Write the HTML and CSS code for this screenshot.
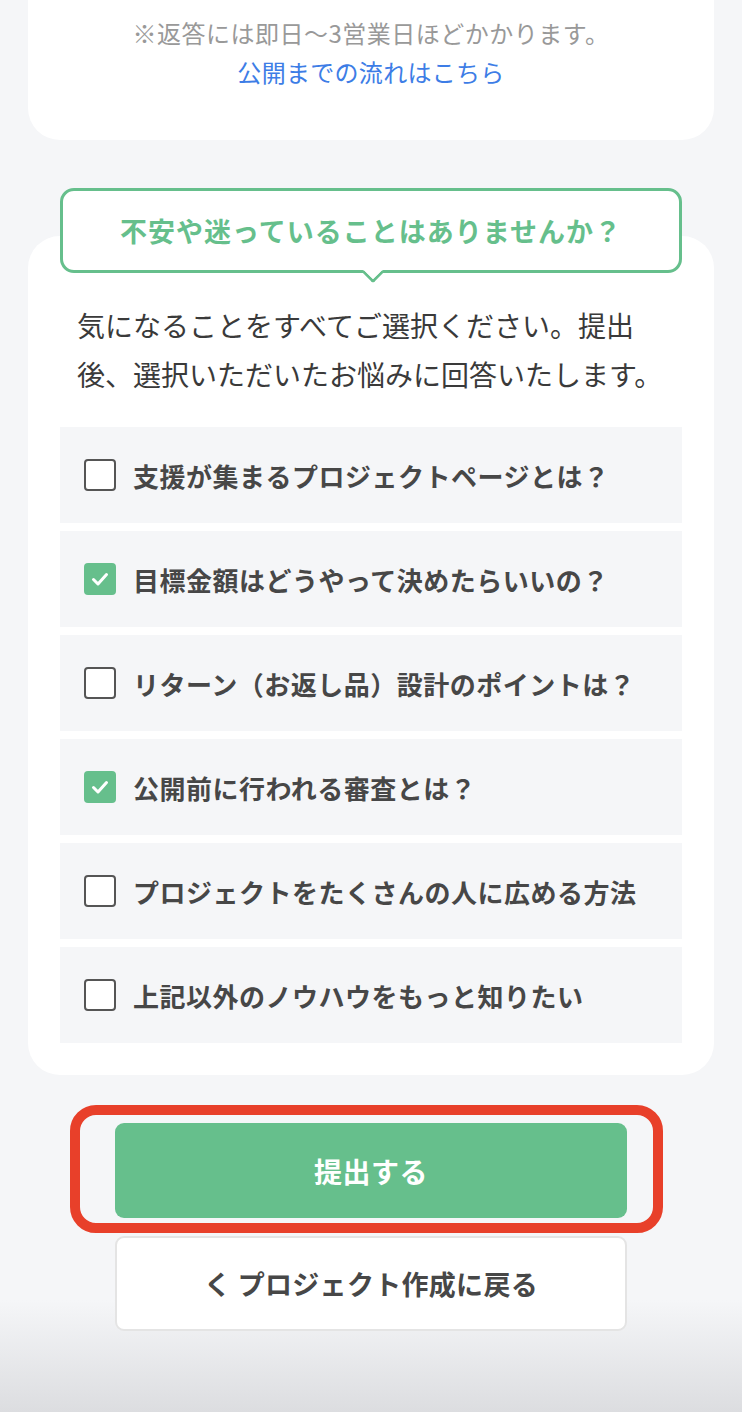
FILE: index.html
```html
<!DOCTYPE html>
<html lang="ja">
<head>
<meta charset="utf-8">
<title>お悩み選択</title>
<link rel="stylesheet" href="styles.css">
</head>
<body>
<main class="page">
  <section class="card card-top">
    <p class="note">※返答には即日〜3営業日ほどかかります。</p>
    <a class="flow-link" href="#">公開までの流れはこちら</a>
  </section>

  <section class="card card-form">
    <div class="bubble">不安や迷っていることはありませんか？</div>
    <p class="lead">気になることをすべてご選択ください。提出後、選択いただいたお悩みに回答いたします。</p>
    <ul class="options">
      <li class="option"><span class="box"></span><span class="label">支援が集まるプロジェクトページとは？</span></li>
      <li class="option"><span class="box checked"><svg viewBox="0 0 32 32" width="32" height="32"><path d="M9.5 16.5 L14 21 L22.5 11.5" fill="none" stroke="#fff" stroke-width="3" stroke-linecap="round" stroke-linejoin="round"/></svg></span><span class="label">目標金額はどうやって決めたらいいの？</span></li>
      <li class="option"><span class="box"></span><span class="label">リターン（お返し品）設計のポイントは？</span></li>
      <li class="option"><span class="box checked"><svg viewBox="0 0 32 32" width="32" height="32"><path d="M9.5 16.5 L14 21 L22.5 11.5" fill="none" stroke="#fff" stroke-width="3" stroke-linecap="round" stroke-linejoin="round"/></svg></span><span class="label">公開前に行われる審査とは？</span></li>
      <li class="option"><span class="box"></span><span class="label">プロジェクトをたくさんの人に広める方法</span></li>
      <li class="option"><span class="box"></span><span class="label">上記以外のノウハウをもっと知りたい</span></li>
    </ul>
  </section>

  <div class="actions">
    <div class="submit-wrap">
      <button class="btn btn-submit" type="button">提出する</button>
      <span class="highlight"></span>
    </div>
    <button class="btn btn-back" type="button">く プロジェクト作成に戻る</button>
  </div>
</main>
</body>
</html>
```

FILE: styles.css
```css
html {
  background: #f5f6f8;
}
body {
  margin: 0;
  min-height: 1412px;
  font-family: "Noto Sans CJK JP", "Noto Sans", sans-serif;
  color: #333;
  background: linear-gradient(to bottom, #f5f6f8 0, #f5f6f8 1300px, #dcdde0 1412px);
}
.page {
  padding: 0 28px;
}
.card {
  background: #fff;
}
.card-top {
  height: 140px;
  box-sizing: border-box;
  padding-top: 14px;
  border-radius: 0 0 32px 32px;
  text-align: center;
}
.note {
  margin: 0;
  font-size: 24px;
  line-height: 38px;
  color: #999;
  letter-spacing: 0.5px;
}
.flow-link {
  display: block;
  font-size: 24px;
  line-height: 40px;
  color: #3d7de6;
  text-decoration: none;
  letter-spacing: 0.3px;
}
.card-form {
  margin-top: 96px;
  padding: 0 32px 32px;
  border-radius: 32px;
  display: flex;
  flex-direction: column;
}
.bubble {
  position: relative;
  margin-top: -48px;
  height: 85px;
  box-sizing: border-box;
  border: 3px solid #66bf8c;
  border-radius: 14px;
  background: #fff;
  display: flex;
  align-items: center;
  justify-content: center;
  font-size: 27px;
  font-weight: 700;
  color: #66bf8c;
  letter-spacing: 1px;
}
.bubble::after {
  content: "";
  position: absolute;
  left: 50%;
  bottom: -10px;
  width: 13px;
  height: 13px;
  margin-left: -6px;
  background: #fff;
  border-right: 3px solid #66bf8c;
  border-bottom: 3px solid #66bf8c;
  border-bottom-right-radius: 3px;
  transform: rotate(45deg);
}
.lead {
  margin: 28px 0 28px 17px;
  width: 600px;
  font-size: 28px;
  line-height: 49px;
  color: #3a3a3a;
}
.options {
  list-style: none;
  margin: 0;
  padding: 0;
  display: flex;
  flex-direction: column;
  gap: 8px;
}
.option {
  height: 96px;
  background: #f5f6f8;
  display: flex;
  align-items: center;
  padding-left: 24px;
  gap: 17px;
}
.box {
  width: 32px;
  height: 32px;
  box-sizing: border-box;
  border: 2px solid #555;
  border-radius: 4px;
  background: #fff;
  flex: none;
  display: flex;
}
.box.checked {
  border: none;
  background: #66bf8c;
}
.label {
  font-size: 26px;
  font-weight: 700;
  color: #474747;
  letter-spacing: 0.5px;
}
.actions {
  margin-top: 48px;
  display: flex;
  flex-direction: column;
  align-items: center;
  gap: 18px;
}
.submit-wrap {
  position: relative;
  width: 512px;
}
.btn {
  width: 512px;
  height: 95px;
  border-radius: 9px;
  font-family: inherit;
  font-weight: 700;
  cursor: pointer;
  display: block;
}
.btn-submit {
  border: none;
  background: #66bf8c;
  color: #fff;
  font-size: 28px;
  letter-spacing: 0.5px;
}
.highlight {
  position: absolute;
  left: -45px;
  right: -36px;
  top: -18px;
  bottom: -15px;
  border: 10px solid #e8402a;
  border-radius: 26px;
  pointer-events: none;
}
.btn-back {
  height: 95px;
  border: 2px solid #e4e4e4;
  background: #fff;
  color: #474747;
  font-size: 27px;
  letter-spacing: 0.3px;
}
```
